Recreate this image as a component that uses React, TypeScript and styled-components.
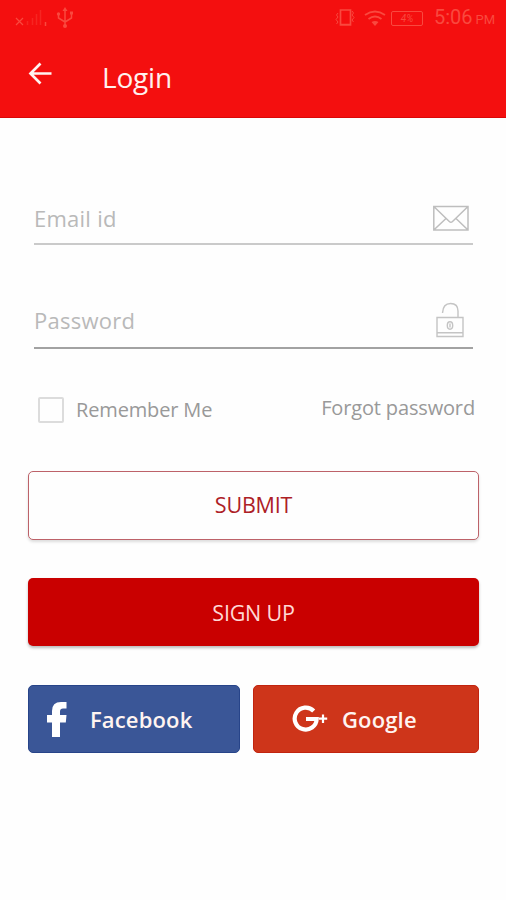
import React from "react";
import styled, { createGlobalStyle } from "styled-components";

const GlobalStyle = createGlobalStyle`
  *, *::before, *::after { box-sizing: border-box; }
  body {
    margin: 0;
    background: #fefefe;
    font-family: "Open Sans", "Noto Sans", sans-serif;
  }
  button, input { font-family: inherit; }
`;

const Screen = styled.main`
  width: 506px;
  height: 900px;
  overflow: hidden;
  background: #fefefe;
`;

const Header = styled.header`
  height: 118px;
  background: #f40f0f;
  border-bottom: 1px solid #d90808;
`;

const StatusBar = styled.div`
  display: flex;
  align-items: center;
  height: 36px;
  padding: 0 11px 0 15px;
  color: #f9493f;
`;

const StatusGroup = styled.div<{ $end?: boolean }>`
  display: flex;
  align-items: center;
  gap: ${(p) => (p.$end ? "0" : "9px")};
  margin-left: ${(p) => (p.$end ? "auto" : "0")};
  svg { display: block; }
`;

const WifiSlot = styled.div`
  margin-left: 9px;
`;

const Battery = styled.div`
  width: 32px;
  height: 15px;
  margin: 0 11px 0 5px;
  border: 1px solid currentColor;
  border-radius: 2px;
  font: italic 10px/13px Roboto, sans-serif;
  text-align: center;
`;

const Clock = styled.div`
  width: 61px;
  padding-top: 1px;
  font: 20px/24px Roboto, sans-serif;
  white-space: nowrap;
  small { font-size: 13px; margin-left: 3px; }
`;

const TitleBar = styled.div`
  display: flex;
  align-items: center;
  height: 81px;
  padding-left: 27px;
`;

const BackButton = styled.button`
  width: 26px;
  height: 26px;
  margin: 0 49px 6px 0;
  padding: 0;
  border: 0;
  background: none;
  svg { display: block; }
`;

const Title = styled.h1`
  margin: 0;
  color: #fff0ee;
  font-size: 28px;
  line-height: 38px;
  font-weight: 400;
  letter-spacing: -0.2px;
`;

const Form = styled.form`
  display: flex;
  flex-direction: column;
  padding: 74px 28px 0;
`;

const Field = styled.label<{ $strong?: boolean }>`
  display: flex;
  align-items: center;
  justify-content: space-between;
  width: 439px;
  height: ${(p) => (p.$strong ? "57px" : "53px")};
  margin: 0 0 ${(p) => (p.$strong ? "0" : "47px")} 6px;
  border-bottom: 2px solid ${(p) => (p.$strong ? "#a2a2a2" : "#cacaca")};
  svg { display: block; flex: none; }
`;

const Input = styled.input`
  width: 300px;
  height: 34px;
  padding: 0;
  border: 0;
  outline: 0;
  background: transparent;
  font-size: 22px;
  letter-spacing: 0.25px;
  &::placeholder { color: #b9b9b9; opacity: 1; }
`;

const Options = styled.div`
  display: flex;
  justify-content: space-between;
  align-items: center;
  height: 40px;
  margin: 41px 3px 0 10px;
  color: #999;
  font-size: 20px;
  line-height: 28px;
  letter-spacing: -0.15px;
`;

const Remember = styled.label`
  display: flex;
  align-items: center;
  gap: 12px;
`;

const Checkbox = styled.input`
  appearance: none;
  width: 26px;
  height: 26px;
  margin: 0;
  border: 2px solid #dcdcdc;
  border-radius: 2px;
`;

const Forgot = styled.a`
  margin-bottom: 4px;
  color: #999;
`;

const ActionButton = styled.button<{ $filled?: boolean }>`
  height: ${(p) => (p.$filled ? "68px" : "69px")};
  width: 451px;
  margin-top: ${(p) => (p.$filled ? "38px" : "41px")};
  padding: 0 0 ${(p) => (p.$filled ? "0" : "2px")};
  border: ${(p) => (p.$filled ? "0" : "1px solid #bd6269")};
  border-radius: 5px;
  background: ${(p) => (p.$filled ? "#c90000" : "#fefefe")};
  color: ${(p) => (p.$filled ? "#ffd8d5" : "#ad2026")};
  font-size: 21.5px;
  letter-spacing: -0.2px;
  box-shadow: 0 2px 3px ${(p) => (p.$filled ? "#0004" : "#0002")};
`;

const SocialRow = styled.div`
  display: grid;
  grid-template-columns: 212px 226px;
  gap: 13px;
  margin-top: 39px;
`;

const SocialButton = styled.button<{ $brand: "facebook" | "google" }>`
  display: flex;
  align-items: center;
  gap: ${(p) => (p.$brand === "facebook" ? "23px" : "14px")};
  height: 68px;
  padding: 0 0 0 ${(p) => (p.$brand === "facebook" ? "18px" : "38px")};
  border: 1px solid ${(p) => (p.$brand === "facebook" ? "#274489" : "#c1240f")};
  border-radius: 5px;
  background: ${(p) => (p.$brand === "facebook" ? "#3a5697" : "#ce351a")};
  color: #fff4f1;
  font-size: 22px;
  font-weight: 600;
  letter-spacing: 0.15px;
  svg { display: block; flex: none; }
`;

const SignalIcon = () => (
  <svg width="32" height="18" viewBox="0 0 32 18" fill="none" stroke="currentColor">
    <path d="m1 9 7 7m0-7-7 7" strokeWidth="1.2" />
    <path d="M12.5 12v4M17.5 9v7M21.5 5v11M25.5 1v15" strokeWidth="1.5" opacity=".4" />
    <path d="M30.5 13v4" strokeWidth="1.5" />
  </svg>
);

const UsbIcon = () => (
  <svg width="18" height="22" viewBox="0 0 18 22" fill="none" stroke="currentColor" strokeWidth="1.5">
    <path d="M9 2v16M2.5 8v3l6.5 4 6.5-4V7" />
    <path d="m6.5 4 2.5-4 2.5 4z" fill="currentColor" stroke="none" />
    <circle cx="9" cy="19" r="2" fill="currentColor" stroke="none" />
    <circle cx="2.5" cy="7" r="1.7" fill="currentColor" stroke="none" />
    <path d="M14 4.5h3v3h-3z" fill="currentColor" stroke="none" />
  </svg>
);

const VibrateIcon = () => (
  <svg width="20" height="20" viewBox="0 0 20 20" fill="none" stroke="currentColor">
    <path d="M5.5 2h10v15h-10zM5 16.5h11" strokeWidth="1.7" />
    <path d="m3 5-1.5 2L3 9l-2 2.5L3 14l-1.5 2M17 3l1.5 2L17 7l2 2.5-2 2.5 1.5 2" />
  </svg>
);

const WifiIcon = () => (
  <svg width="22" height="18" viewBox="0 0 22 18" fill="none" stroke="currentColor" strokeWidth="1.8">
    <path d="M1 6q10-7 20 0M4.5 10q6.5-5 13 0" />
    <path d="m7.5 13 3.5 4 3.5-4q-3.5-2-7 0z" fill="currentColor" stroke="none" />
  </svg>
);

const ArrowIcon = () => (
  <svg width="26" height="26" viewBox="0 0 26 26" fill="none" stroke="#fff3f1" strokeWidth="2.7">
    <path d="M24.5 12.5H3.5M13.5 2.5 3.5 12.5l10 10" />
  </svg>
);

const MailIcon = () => (
  <svg width="40" height="28" viewBox="0 0 40 28" fill="none" stroke="#bebebe" strokeWidth="1.5">
    <path d="M.8 2.5H35v23.5H.8zM.8 2.5l15.5 15q1.6 1.5 3.2 0L35 2.5M.8 26l12.2-11.5M35 26 23 14.5" />
  </svg>
);

const LockIcon = () => (
  <svg width="37" height="36" viewBox="0 0 37 36" fill="none" stroke="#c4c4c4" strokeWidth="1.4">
    <path d="M6.5 11Q7 1.5 14.5 1.5T22 9v6M1 15.5h26v19H1zM1 30.7h26" />
    <ellipse cx="14" cy="23.5" rx="2.7" ry="3.7" />
    <path d="M14 21.5v4" />
  </svg>
);

const FacebookIcon = () => (
  <svg width="20" height="35" viewBox="0 0 20 35" fill="white">
    <path d="M5 35V20.5H0V13h5V9Q5 0 14 0h5.5v6.5H16Q13 6.500 13 9.500V13h6.500l-.7 7.500H13V35z" />
  </svg>
);

const GoogleIcon = () => (
  <svg width="36" height="28" viewBox="0 0 36 28" fill="none" stroke="white">
    <path d="M21.7 6A11 11 0 1 0 24.700 14H14" strokeWidth="4.200" />
    <path d="M31 9.500v8.500M27 13.700h8.200" strokeWidth="2.200" />
  </svg>
);

export default function App() {
  return (
    <>
      <GlobalStyle />
      <Screen>
        <Header>
          <StatusBar>
            <StatusGroup><SignalIcon /><UsbIcon /></StatusGroup>
            <StatusGroup $end>
              <VibrateIcon />
              <WifiSlot><WifiIcon /></WifiSlot>
              <Battery>4%</Battery>
              <Clock>5:06<small>PM</small></Clock>
            </StatusGroup>
          </StatusBar>
          <TitleBar>
            <BackButton type="button" aria-label="Back"><ArrowIcon /></BackButton>
            <Title>Login</Title>
          </TitleBar>
        </Header>
        <Form onSubmit={(e) => e.preventDefault()}>
          <Field><Input type="email" placeholder="Email id" /><MailIcon /></Field>
          <Field $strong><Input type="password" placeholder="Password" /><LockIcon /></Field>
          <Options>
            <Remember><Checkbox type="checkbox" />Remember Me</Remember>
            <Forgot>Forgot password</Forgot>
          </Options>
          <ActionButton type="submit">SUBMIT</ActionButton>
          <ActionButton type="button" $filled>SIGN UP</ActionButton>
          <SocialRow>
            <SocialButton type="button" $brand="facebook"><FacebookIcon />Facebook</SocialButton>
            <SocialButton type="button" $brand="google"><GoogleIcon />Google</SocialButton>
          </SocialRow>
        </Form>
      </Screen>
    </>
  );
}
